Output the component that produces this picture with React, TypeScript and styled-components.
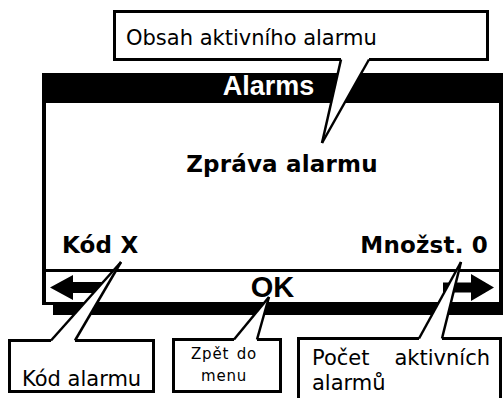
import styled, { createGlobalStyle } from "styled-components";

const GlobalStyle = createGlobalStyle`
  html, body {
    margin: 0;
    padding: 0;
    background: #fff;
  }
  body {
    font-family: "DejaVu Sans", Verdana, sans-serif;
    color: #000;
  }
`;

type Pt = [number, number];

const LEADERS: { tip: Pt; left: Pt; right: Pt; fillY: number }[] = [
  { tip: [322, 143], left: [341, 59.5], right: [369, 59.5], fillY: 57 },
  { tip: [121, 262], left: [51, 340.5], right: [75, 340.5], fillY: 342.5 },
  { tip: [269, 297], left: [234, 339.5], right: [257, 339.5], fillY: 341.5 },
  { tip: [461, 262], left: [419, 338.5], right: [442, 338.5], fillY: 340.5 },
];

export default function App() {
  return (
    <>
      <GlobalStyle />
      <Canvas>
        <Panel>
          <TitleBar>Alarms</TitleBar>
          <Screen>
            <Message>Zpráva alarmu</Message>
            <InfoRow>
              <span>Kód X</span>
              <span>Množst. 0</span>
            </InfoRow>
          </Screen>
          <NavBar>
            <svg width="52" height="27" viewBox="0 0 52 27">
              <path d="M0 13.5 L23 1 V8 H52 V19 H23 V26 Z" fill="#000" />
            </svg>
            <OkLabel>OK</OkLabel>
            <svg width="51" height="27" viewBox="0 0 51 27">
              <path d="M51 13.5 L28 0 V8.5 H0 V18.5 H28 V27 Z" fill="#000" />
            </svg>
          </NavBar>
          <Shadow />
        </Panel>

        <Callout $x={113} $y={10} $w={376} $h={51} $pad="13px 0 0 10px">
          Obsah aktivního alarmu
        </Callout>
        <Callout $x={8} $y={339} $w={147} $h={54} $pad="25px 0 0 11px">
          Kód alarmu
        </Callout>
        <SmallCallout $x={172} $y={338} $w={110} $h={55} $pad="2px 6px 0 0">
          Zpět do
          <br />
          menu
        </SmallCallout>
        <Callout $x={297} $y={337} $w={205} $h={80} $pad="6px 9px 0 12px" $justify>
          Počet aktivních alarmů
        </Callout>

        <Leaders viewBox="0 0 504 398">
          {LEADERS.map(({ tip, left, right, fillY }, i) => (
            <g key={i}>
              <polygon
                points={`${tip.join(",")} ${left[0]},${left[1]} ${left[0]},${fillY} ${right[0]},${fillY} ${right.join(",")}`}
                fill="#fff"
              />
              <line x1={tip[0]} y1={tip[1]} x2={left[0]} y2={left[1]} />
              <line x1={tip[0]} y1={tip[1]} x2={right[0]} y2={right[1]} />
            </g>
          ))}
        </Leaders>
      </Canvas>
    </>
  );
}

const Canvas = styled.div`
  position: relative;
  width: 504px;
  height: 398px;
  overflow: hidden;
  box-sizing: border-box;
  padding: 73px 0 0 42px;
  background: #fff;
`;

const Panel = styled.section`
  width: 461px;
  display: flex;
  flex-direction: column;
`;

const TitleBar = styled.header`
  height: 30px;
  padding-right: 8px;
  background: #000;
  color: #fff;
  font: bold 27px/26px "Liberation Sans", Arial, sans-serif;
  text-align: center;
`;

const Screen = styled.div`
  height: 166px;
  box-sizing: border-box;
  display: flex;
  flex-direction: column;
  justify-content: space-between;
  padding: 48px 11px 11px 16px;
  border-left: 4px solid #000;
  border-right: 4px solid #000;
  font: bold 23px/26px "DejaVu Sans", Verdana, sans-serif;
  letter-spacing: 0.2px;
`;

const Message = styled.div`
  padding-left: 14px;
  text-align: center;
`;

const InfoRow = styled.div`
  display: flex;
  justify-content: space-between;
`;

const NavBar = styled.div`
  height: 36px;
  box-sizing: border-box;
  display: flex;
  align-items: center;
  justify-content: space-between;
  padding: 0 5px 0 4px;
  border: 3px solid #000;
  border-left-width: 4px;
  border-right-width: 4px;

  svg {
    display: block;
  }
`;

const OkLabel = styled.span`
  font: bold 29px/30px "Liberation Sans", Arial, sans-serif;
`;

const Shadow = styled.div`
  height: 10px;
  margin-left: 11px;
  background: #000;
`;

const Callout = styled.div<{
  $x: number;
  $y: number;
  $w: number;
  $h: number;
  $pad: string;
  $justify?: boolean;
}>`
  position: absolute;
  left: ${(p) => p.$x}px;
  top: ${(p) => p.$y}px;
  width: ${(p) => p.$w}px;
  height: ${(p) => p.$h}px;
  box-sizing: border-box;
  padding: ${(p) => p.$pad};
  border: 3px solid #000;
  background: #fff;
  z-index: 1;
  font: 21px/25px "DejaVu Sans", Verdana, sans-serif;
  text-align: ${(p) => (p.$justify ? "justify" : "left")};
`;

const SmallCallout = styled(Callout)`
  font-size: 15px;
  line-height: 22px;
  letter-spacing: 0.8px;
  word-spacing: 2px;
  text-align: center;
`;

const Leaders = styled.svg`
  position: absolute;
  inset: 0;
  width: 504px;
  height: 398px;
  z-index: 2;
  pointer-events: none;

  line {
    stroke: #000;
    stroke-width: 2.5;
  }
`;
